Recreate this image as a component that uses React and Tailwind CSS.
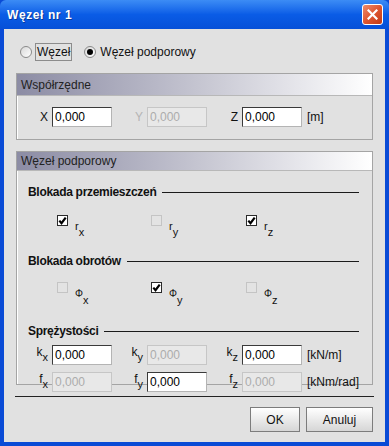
import React from "react";

const FONT = "font-['Liberation_Sans',Arial,sans-serif]";

function Field({ value, disabled }) {
  return disabled ? (
    <div className="w-[60px] h-[20px] border border-[#c6c6c6] bg-[#e8e8e8] text-[#acacac] text-[12px] leading-[18px] pl-[2px]">
      {value}
    </div>
  ) : (
    <div className="w-[60px] h-[20px] border border-t-[#3a3a3a] border-l-[#3a3a3a] border-r-[#b4b4b4] border-b-[#b4b4b4] bg-white text-black text-[12px] leading-[18px] pl-[2px]">
      {value}
    </div>
  );
}

function SubLabel({ base, sub, phi }) {
  return (
    <span className="inline-flex items-start h-[16px] text-[#111]">
      <span className={`${phi ? "text-[10px]" : "text-[11px]"} leading-[10px]`}>{base}</span>
      <span className="text-[11px] leading-[10px] mt-[6px]">{sub}</span>
    </span>
  );
}

function Check({ checked, disabled }) {
  if (disabled)
    return <div className="w-[11px] h-[11px] border border-[#c4c4c4] bg-[#e3e3e3] shrink-0" />;
  return (
    <div className="w-[11px] h-[11px] border border-[#2a2a2a] bg-white shrink-0 flex items-center justify-center">
      {checked && (
        <svg width="9" height="9" viewBox="0 0 9 9">
          <path d="M1.3 4.6 L3.5 7.2 L7.7 1.6" stroke="#000" strokeWidth="2.2" fill="none" />
        </svg>
      )}
    </div>
  );
}

function CheckItem({ base, sub, checked, disabled, phi, w }) {
  return (
    <div className={`flex items-start ${w}`}>
      <div className="mt-[2px]">
        <Check checked={checked} disabled={disabled} />
      </div>
      <div className="ml-[7px]">
        <SubLabel base={base} sub={sub} phi={phi} />
      </div>
    </div>
  );
}

function SectionTitle({ text }) {
  return (
    <div className="flex items-center h-[14px] pl-[11px] pr-[13px]">
      <span className="text-[12px] font-bold text-[#111] leading-[14px] tracking-[-0.3px] whitespace-nowrap">{text}</span>
      <div className="flex-1 h-px bg-[#1a1a1a] ml-[6px]" />
    </div>
  );
}

function PanelHeader({ text }) {
  return (
    <div className="h-[22px] bg-gradient-to-r from-[#8c8ca4] via-[#c4c4d0] to-[#ffffff] border-b border-[#b8b8b8] flex items-center pl-[4px] text-[12px] text-[#222]">
      {text}
    </div>
  );
}

function LabeledField({ label, sub, value, disabled, labelGray }) {
  return (
    <div className="flex items-center">
      <div className={`w-[20px] pr-[4px] flex justify-end ${labelGray ? "text-[#b4b4b4]" : "text-[#111]"}`}>
        {sub ? (
          <span className="inline-flex items-start h-[16px]">
            <span className="text-[12px] leading-[10px]">{label}</span>
            <span className="text-[11px] leading-[10px] mt-[5px]">{sub}</span>
          </span>
        ) : (
          <span className="text-[12px]">{label}</span>
        )}
      </div>
      <Field value={value} disabled={disabled} />
    </div>
  );
}

export default function App() {
  return (
    <div className={`w-[389px] h-[446px] flex flex-col bg-[#0a4bd6] ${FONT}`}>
      {/* Title bar */}
      <div className="h-[29px] shrink-0 flex items-center justify-between pl-[7px] pr-[6px] bg-gradient-to-b from-[#3c8cf5] via-[#0a5ce6] to-[#0650d8] rounded-t-[6px]">
        <span className="text-white text-[12px] font-bold tracking-[0.6px] [text-shadow:1px_1px_0_#0a3a9a]">
          Węzeł nr 1
        </span>
        <div className="w-[21px] h-[21px] rounded-[3px] border border-white bg-gradient-to-br from-[#ee8a6a] via-[#de5630] to-[#c23a14] flex items-center justify-center">
          <svg width="11" height="11" viewBox="0 0 11 11">
            <path d="M1.5 1.5 L9.5 9.5 M9.5 1.5 L1.5 9.5" stroke="#fff" strokeWidth="2.2" strokeLinecap="square" />
          </svg>
        </div>
      </div>

      {/* Body */}
      <div className="flex-1 mx-[4px] mb-[4px] bg-[#e1e1e1] flex flex-col pt-[14px]">
        {/* Radio row */}
        <div className="h-[18px] flex items-center pl-[16px] text-[12px] text-[#111]">
          <div className="w-[12px] h-[12px] rounded-full border border-[#8a8a8a] bg-gradient-to-br from-[#d8d8d8] to-[#ffffff]" />
          <div className="ml-[3px] h-[18px] px-[1px] border border-[#8c8c8c] flex items-center">Węzeł</div>
          <div className="ml-[12px] w-[12px] h-[12px] rounded-full border border-[#8a8a8a] bg-gradient-to-br from-[#d8d8d8] to-[#ffffff] flex items-center justify-center">
            <div className="w-[6px] h-[6px] rounded-full bg-black" />
          </div>
          <div className="ml-[4px]">Węzeł podporowy</div>
        </div>

        {/* Panel 1 */}
        <div className="mt-[12px] ml-[12px] w-[357px] h-[67px] border border-[#a4a4a4] shadow-[inset_1px_1px_0_#ffffff] flex flex-col">
          <PanelHeader text="Współrzędne" />
          <div className="mt-[11px] flex items-center pl-[15px] gap-[15px]">
            <LabeledField label="X" value="0,000" />
            <LabeledField label="Y" value="0,000" disabled labelGray />
            <LabeledField label="Z" value="0,000" />
            <span className="text-[12px] text-[#111] -ml-[10px]">[m]</span>
          </div>
        </div>

        {/* Panel 2 */}
        <div className="mt-[11px] ml-[12px] w-[357px] h-[234px] border border-[#a4a4a4] shadow-[inset_1px_1px_0_#ffffff] flex flex-col">
          <PanelHeader text="Węzeł podporowy" />
          <div className="mt-[14px]">
            <SectionTitle text="Blokada przemieszczeń" />
          </div>
          <div className="mt-[14px] flex pl-[40px]">
            <CheckItem base="r" sub="x" checked w="w-[94px]" />
            <CheckItem base="r" sub="y" disabled w="w-[95px]" />
            <CheckItem base="r" sub="z" checked w="w-[94px]" />
          </div>
          <div className="mt-[17px]">
            <SectionTitle text="Blokada obrotów" />
          </div>
          <div className="mt-[12px] flex pl-[40px]">
            <CheckItem base="Φ" sub="x" disabled phi w="w-[94px]" />
            <CheckItem base="Φ" sub="y" checked phi w="w-[95px]" />
            <CheckItem base="Φ" sub="z" disabled phi w="w-[94px]" />
          </div>
          <div className="mt-[19px]">
            <SectionTitle text="Sprężystości" />
          </div>
          <div className="mt-[7px] flex items-center pl-[15px] gap-[15px]">
            <LabeledField label="k" sub="x" value="0,000" />
            <LabeledField label="k" sub="y" value="0,000" disabled />
            <LabeledField label="k" sub="z" value="0,000" />
            <span className="text-[12px] text-[#111] -ml-[10px]">[kN/m]</span>
          </div>
          <div className="mt-[7px] flex items-center pl-[15px] gap-[15px]">
            <LabeledField label="f" sub="x" value="0,000" disabled />
            <LabeledField label="f" sub="y" value="0,000" />
            <LabeledField label="f" sub="z" value="0,000" disabled />
            <span className="text-[12px] text-[#111] -ml-[10px]">[kNm/rad]</span>
          </div>
        </div>

        {/* Separator */}
        <div className="mt-[11px] ml-[11px] w-[359px] h-px bg-[#222]" />

        {/* Buttons */}
        <div className="mt-[10px] flex justify-end pr-[12px] gap-[6px]">
          <button className="w-[50px] h-[25px] border border-[#7c7c7c] bg-gradient-to-b from-[#ffffff] to-[#d6d6d6] text-[12px] text-[#111]">
            OK
          </button>
          <button className="w-[67px] h-[25px] border border-[#7c7c7c] bg-gradient-to-b from-[#ffffff] to-[#d6d6d6] text-[12px] text-[#111]">
            Anuluj
          </button>
        </div>
      </div>
    </div>
  );
}
